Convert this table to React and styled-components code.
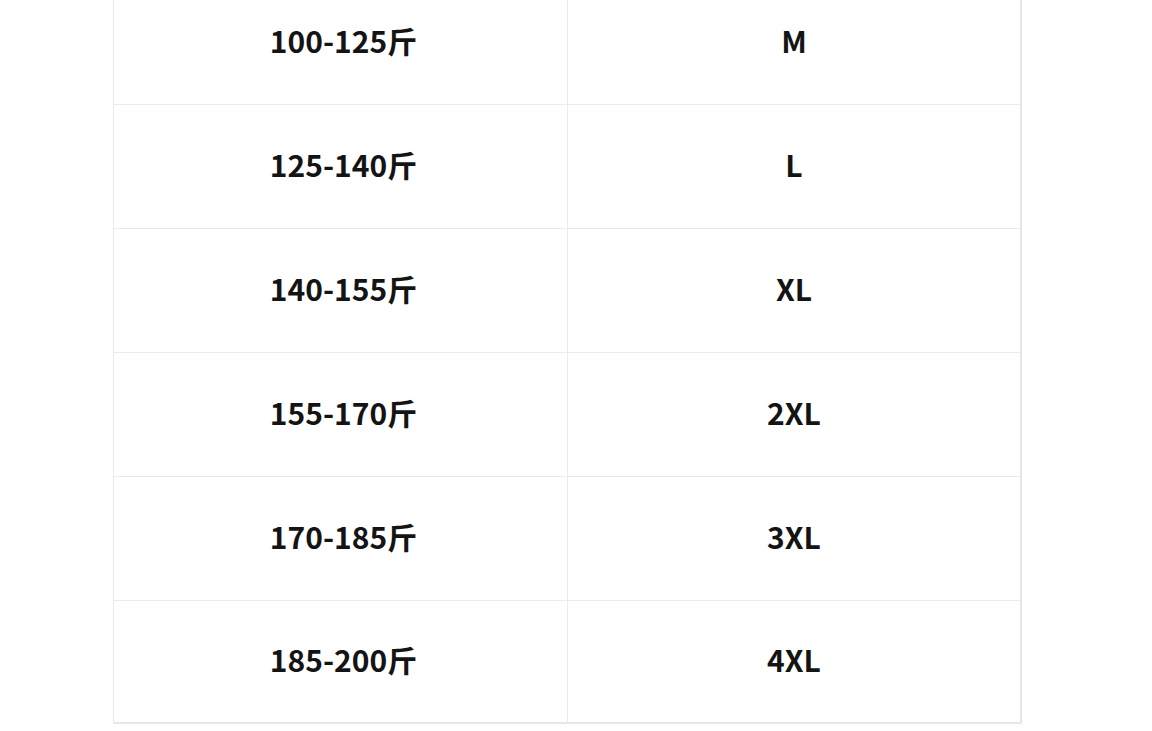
import React from "react";
import styled, { createGlobalStyle } from "styled-components";

const GlobalStyle = createGlobalStyle`
  html, body {
    margin: 0;
    padding: 0;
    background: #ffffff;
    overflow: hidden;
  }
  body {
    font-family: "Noto Sans CJK SC", "Noto Sans", sans-serif;
  }
  *, *::before, *::after {
    box-sizing: border-box;
  }
`;

const rows = [
  ["100-125斤", "M"],
  ["125-140斤", "L"],
  ["140-155斤", "XL"],
  ["155-170斤", "2XL"],
  ["170-185斤", "3XL"],
  ["185-200斤", "4XL"],
];

export default function App() {
  return (
    <>
      <GlobalStyle />
      <Page>
        <Table>
          {rows.map(([weight, size]) => (
            <Row key={weight}>
              <Cell $shift={6}>{weight}</Cell>
              <Cell $last>{size}</Cell>
            </Row>
          ))}
        </Table>
      </Page>
    </>
  );
}

const Page = styled.div`
  width: 1152px;
  height: 731px;
  overflow: hidden;
  background: #ffffff;
`;

const Table = styled.div`
  margin: -19px 0 0 113px;
  width: 909px;
  display: flex;
  flex-direction: column;
  border-left: 1px solid #e9e9e9;
  border-right: 2px solid #e6e6e6;
  border-bottom: 2px solid #e6e6e6;
`;

const Row = styled.div`
  display: grid;
  grid-template-columns: 454px 1fr;
  height: 124px;
  border-bottom: 1px solid #ebebeb;
  &:last-child {
    border-bottom: none;
    height: 121px;
  }
`;

const Cell = styled.div`
  display: flex;
  align-items: center;
  justify-content: center;
  padding-bottom: 5px;
  padding-left: ${(p) => p.$shift || 0}px;
  font-size: 30px;
  font-weight: 700;
  color: #141414;
  border-right: ${(p) => (p.$last ? "none" : "1px solid #ebebeb")};
`;
